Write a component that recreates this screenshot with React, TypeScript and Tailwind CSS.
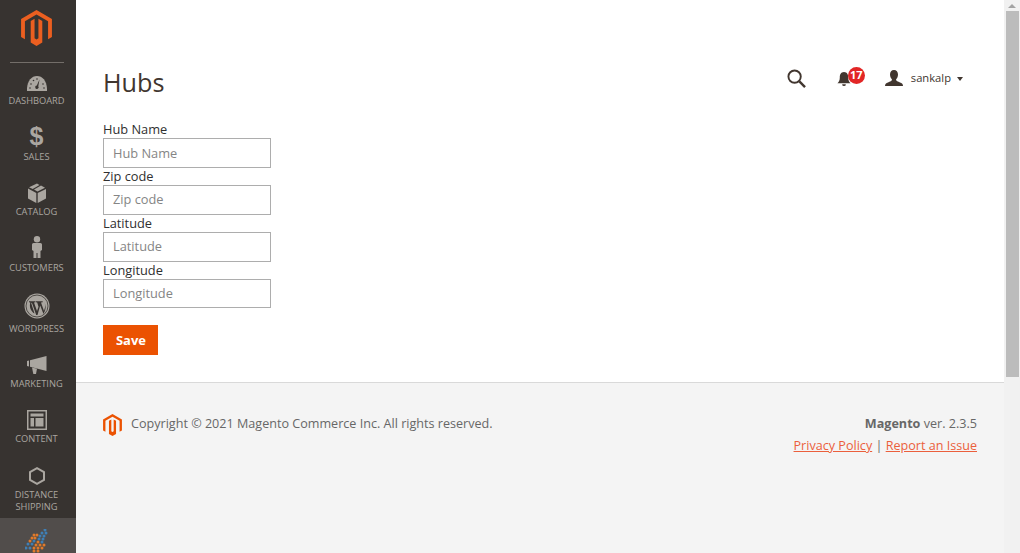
const Logo = ({ className, color }: { className: string; color: string }) => (
  <svg viewBox="0 0 24 28" className={className} fill={color}>
    <path d="M12 0 24 7V21L21 22.7V8.7L12 3.500 3 8.700V22.700L0 21V7Z" />
    <path d="M13.500 6.900V22L12 23 10.500 22V6.900L7.500 8.600V25.300L12 28 16.500 25.300V8.600Z" />
  </svg>
)

const navItems = [
  {
    label: ["DASHBOARD"],
    h: "h-[36px]",
    mb: "mb-[4px]",
    icon: (
      <svg viewBox="0 0 20 15" className="w-[20px] h-[15px]" fill="#aaa6a0">
        <path d="M0 15C-.5 6 4 0 10 0s10.500 6 10 15Z" />
        <path d="M12.500 3.500 9.800 9.500a1.700 1.700 0 1 0 1.500.7Z" fill="#373330" />
        <circle cx="4" cy="8" r=".8" fill="#373330" />
        <circle cx="6.500" cy="4.500" r=".8" fill="#373330" />
        <circle cx="10" cy="3" r=".8" fill="#373330" />
        <circle cx="16" cy="8" r=".8" fill="#373330" />
        <circle cx="3" cy="12" r=".8" fill="#373330" />
        <circle cx="17" cy="12" r=".8" fill="#373330" />
      </svg>
    ),
  },
  {
    label: ["SALES"],
    h: "h-[56px]",
    mb: "mb-[4px]",
    icon: (
      <span className="text-[25px] leading-[21px] font-bold text-[#aaa6a0] font-['Liberation_Sans',sans-serif]">$</span>
    ),
  },
  {
    label: ["CATALOG"],
    h: "h-[55px]",
    mb: "mb-[3px]",
    icon: (
      <svg viewBox="0 0 18 20" className="w-[18px] h-[20px]" fill="#aaa6a0">
        <path d="M9 0 11.500 1.400 4.700 5.300 1 3.700 Z" transform="translate(0 .6)" />
        <path d="M13 2.600 17 4.800 9.500 8.600 6 6.600Z" />
        <path d="M0 5.600 8.300 10V20L0 15.400Z" />
        <path d="M18 6 9.700 10V20L18 15.400Z" />
      </svg>
    ),
  },
  {
    label: ["CUSTOMERS"],
    h: "h-[56px]",
    mb: "mb-[4px]",
    icon: (
      <svg viewBox="0 0 12 22" className="w-[12px] h-[22px]" fill="#aaa6a0">
        <circle cx="6" cy="3.200" r="3.200" />
        <path d="M2.500 7H9.500Q11 7 11 8.500V14L9.500 15V22H6.500V17H5.500V22H2.500V15L1 14V8.500Q1 7 2.500 7Z" />
      </svg>
    ),
  },
  {
    label: ["WORDPRESS"],
    h: "h-[61px]",
    mb: "mb-[4px]",
    icon: (
      <svg viewBox="0 0 26 26" className="w-[26px] h-[26px]">
        <circle cx="13" cy="13" r="12.500" fill="#aaa6a0" />
        <circle cx="13" cy="13" r="11" fill="none" stroke="#373330" strokeWidth=".8" />
        <path
          d="M5 8.300H11.500V9.200L10 9.500 13 18 14.500 13.800 13.200 9.500 12 9.200V8.300H18.700V9.200L17 9.500 20 18 21 14.500C21.600 12 21 10.500 20 9.500 21.500 11 23 15 19.500 21L16.200 12.500 13.500 22H12.200L8.200 10.500 7 9.500 10.500 20.500C7 18.500 5 14 6.300 9.500L5 9.200Z"
          fill="#373330"
        />
      </svg>
    ),
  },
  {
    label: ["MARKETING"],
    h: "h-[55px]",
    mb: "mb-[4px]",
    icon: (
      <svg viewBox="0 0 20 18" className="w-[20px] h-[18px]" fill="#aaa6a0">
        <path d="M0 5 2 4.500V10.500L0 10Z" />
        <path d="M3 4.300 19.500 0V15L3 10.800Z" />
        <path d="M5 11.400 10 12.700 9 18H6.300Z" />
      </svg>
    ),
  },
  {
    label: ["CONTENT"],
    h: "h-[55px]",
    mb: "mb-[3px]",
    icon: (
      <svg viewBox="0 0 20 20" className="w-[20px] h-[20px]" fill="#aaa6a0">
        <path fillRule="evenodd" d="M0 0H20V20H0ZM1.500 1.500V18.500H18.500V1.500Z" />
        <path d="M3.500 3.500H16.500V6.500H3.500ZM3.500 8H7V16.500H3.500ZM8.500 8H16.500V16.500H8.500Z" />
      </svg>
    ),
  },
  {
    label: ["DISTANCE", "SHIPPING"],
    h: "h-[68px]",
    mb: "mb-[4px]",
    icon: (
      <svg viewBox="0 0 16 18" className="w-[16px] h-[18px]" fill="none" stroke="#aaa6a0" strokeWidth="2">
        <path d="M8 1.200 15 5V13L8 16.800 1 13V5Z" />
      </svg>
    ),
  },
]

const fields = ["Hub Name", "Zip code", "Latitude", "Longitude"]

const blue = "#3f7fb5"
const orange = "#e07a2a"
const dots = [
  [20, 1, blue],
  [17, 4, blue], [21, 4, blue],
  [9, 6, orange], [12, 6, orange], [15, 7, blue], [19, 7, blue],
  [7, 9, orange], [10, 9, orange], [14, 10, blue], [18, 10, blue],
  [5, 12, orange], [9, 12, blue], [13, 13, orange], [17, 13, blue],
  [3, 15, blue], [7, 15, blue], [11, 16, orange], [15, 16, orange], [19, 16, orange],
  [1, 19, blue], [5, 19, blue], [9, 19, orange], [13, 19, orange], [17, 19, orange],
  [9, 22, orange], [13, 22, orange],
] as const

export default function App() {
  return (
    <div className="flex h-[553px] overflow-hidden bg-white font-['Open_Sans',sans-serif] text-[#303030]">
      <aside className="flex w-[76px] shrink-0 flex-col bg-[#373330]">
        <div className="flex h-[63px] flex-col items-center pt-[10px] pr-[3px]">
          <Logo className="w-[31px] h-[36px]" color="#eb5f20" />
          <div className="mt-[16px] h-px w-[54px] bg-[#736e69]" />
        </div>
        <nav className="flex flex-col pt-[8px] pr-[3px]">
          {navItems.map((item) => (
            <div key={item.label[0]} className={`flex flex-col items-center justify-end ${item.h}`}>
              <div className={`flex justify-center ${item.mb}`}>{item.icon}</div>
              {item.label.map((line) => (
                <span key={line} className="text-[9.300px] leading-[12px] text-[#aaa6a0]">
                  {line}
                </span>
              ))}
            </div>
          ))}
        </nav>
        <div className="mt-[5px] flex flex-1 justify-center bg-[#514d4b] pt-[11px] pr-[3px]">
          <svg viewBox="0 0 23 24" className="w-[23px] h-[24px]">
            {dots.map(([x, y, c], i) => (
              <circle key={i} cx={x} cy={y} r="1.500" fill={c} />
            ))}
          </svg>
        </div>
      </aside>

      <main className="flex min-w-0 flex-1 flex-col">
        <div className="h-[382px] shrink-0 px-[27px] pt-[65px]">
          <div className="flex items-start justify-between">
            <h1 className="text-[25.200px] leading-[35px] font-normal text-[#41362f]">Hubs</h1>
            <div className="mt-[3px] flex items-center pr-[14px]">
              <svg viewBox="0 0 20 20" className="w-[19px] h-[19px]" fill="none" stroke="#41362f" strokeWidth="2">
                <circle cx="8" cy="8" r="6.500" />
                <path d="M13 13 19 19" strokeWidth="2.500" />
              </svg>
              <div className="relative ml-[31px] mr-[34px] h-[20px] w-[14px]">
                <svg viewBox="0 0 14 16" className="mt-[4px] w-[14px] h-[15px]" fill="#41362f">
                  <path d="M7 0C10.500 0 11.500 3 11.500 6 11.500 9 12.500 10.500 14 12H0C1.500 10.500 2.500 9 2.500 6 2.500 3 3.500 0 7 0Z" />
                  <path d="M5 13H9A2 2 0 0 1 5 13Z" />
                </svg>
                <span className="absolute left-[11px] -top-[1px] flex h-[17px] w-[17px] items-center justify-center rounded-full bg-[#e22626] text-[11px] font-bold text-white">
                  17
                </span>
              </div>
              <svg viewBox="0 0 18 16" className="w-[18px] h-[16px]" fill="#41362f">
                <path d="M9 0C11.500 0 13 2 13 4.500 13 6.500 12 8.500 11 9.500 11 11 13 11.500 15 12.500 17 13.300 18 14 18 16H0C0 14 1 13.300 3 12.500 5 11.500 7 11 7 9.500 6 8.500 5 6.500 5 4.500 5 2 6.500 0 9 0Z" />
              </svg>
              <span className="ml-[8px] text-[11.200px] leading-[16px] text-[#41362f]">sankalp</span>
              <span className="ml-[6px] mt-[1px] h-0 w-0 border-x-[3.500px] border-t-[4.500px] border-x-transparent border-t-[#41362f]" />
            </div>
          </div>

          <form className="mt-[21px] flex w-[168px] flex-col">
            {fields.map((f, i) => (
              <label key={f} className="flex flex-col text-[12.800px] leading-[17px] text-[#303030]">
                {f}
                <input
                  placeholder={f}
                  className={`w-[168px] border border-[#adadad] px-[9px] text-[12.800px] text-[#303030] outline-none placeholder:text-[#858585] ${
                    i === 0 ? "h-[30px]" : i === 3 ? "h-[29px] pb-[1px]" : "h-[30px] pb-[2px]"
                  }`}
                />
              </label>
            ))}
            <button
              type="button"
              className="mt-[17px] h-[30px] w-[55px] bg-[#eb5202] pt-[1px] pl-[1px] text-[13px] font-bold text-white"
            >
              Save
            </button>
          </form>
        </div>

        <footer className="flex flex-1 justify-between border-t border-[#d9d9d9] bg-[#f4f4f4] px-[27px] pt-[31px] text-[12.600px] text-[#676767]">
          <div className="flex items-start">
            <Logo className="w-[19px] h-[22px] mr-[9px]" color="#eb5202" />
            <span className="leading-[20px]">Copyright © 2021 Magento Commerce Inc. All rights reserved.</span>
          </div>
          <div className="flex flex-col items-end leading-[20px]">
            <p>
              <b className="font-bold">Magento</b> ver. 2.3.5
            </p>
            <p className="mt-[2px]">
              <a className="text-[#eb5f3c] underline">Privacy Policy</a> | <a className="text-[#eb5f3c] underline">Report an Issue</a>
            </p>
          </div>
        </footer>
      </main>

      <div className="flex w-[16px] shrink-0 flex-col items-center bg-[#f1f1f1]">
        <div className="mt-[4px] h-0 w-0 border-x-[4px] border-b-[4px] border-x-transparent border-b-[#a3a3a3]" />
        <div className="mt-[3px] ml-[1px] h-[366px] w-[13px] bg-[#bcbcbc]" />
      </div>
    </div>
  )
}
